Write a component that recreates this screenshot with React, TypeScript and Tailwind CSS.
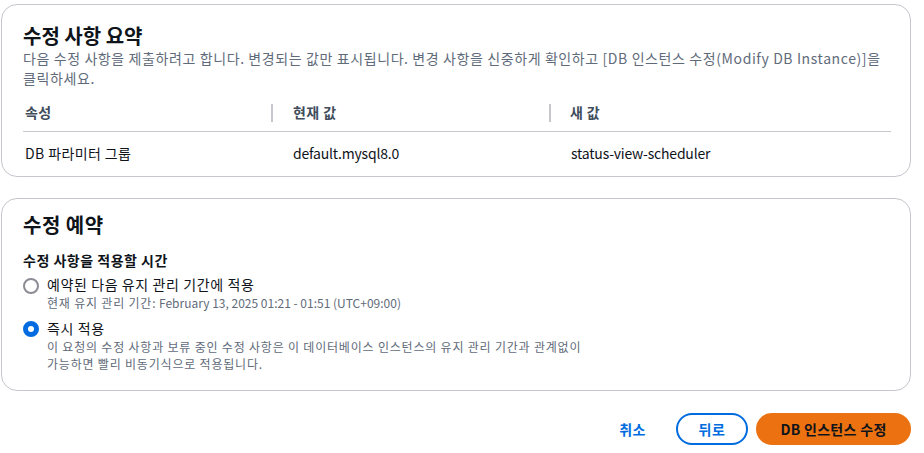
import React from "react";

const font = { fontFamily: '"Noto Sans CJK KR", "Open Sans", sans-serif' };

export default function App() {
  return (
    <div className="w-[924px] h-[453px] bg-white text-[#0f141a] [word-break:keep-all]" style={font}>
      <div className="pl-[1px] pt-[4px] w-[911px] flex flex-col">
        {/* Card 1 */}
        <div className="border border-[#c6c6cd] rounded-[16px] px-[21px] pt-[17px] h-[173px]">
          <h2 className="text-[20px] font-bold leading-[28px]">수정 사항 요약</h2>
          <p className="text-[14px] leading-[20px] text-[#5f6b7a] mt-[-2px] pr-[2px] tracking-[0.6px]">
            다음 수정 사항을 제출하려고 합니다. 변경되는 값만 표시됩니다. 변경 사항을 신중하게 확인하고 [DB 인스턴스 수정(Modify DB Instance)]을 클릭하세요.
          </p>
          <div className="mt-[6px] mr-[-2px]">
            <div className="flex items-center h-[38px] border-b border-[#c6c6cd] text-[14px] font-bold text-[#414d5c] tracking-[0.4px]">
              <div className="w-[248px] pl-[2px]">속성</div>
              <div className="w-[2px] h-[18px] bg-[#c6c6cd]" />
              <div className="w-[276px] pl-[20px]">현재 값</div>
              <div className="w-[2px] h-[18px] bg-[#c6c6cd]" />
              <div className="pl-[19px]">새 값</div>
            </div>
            <div className="flex items-center h-[42px] text-[14px]">
              <div className="w-[250px] pl-[2px] tracking-[0.4px]">DB 파라미터 그룹</div>
              <div className="w-[278px] pl-[20px] tracking-[-0.2px]">default.mysql8.0</div>
              <div className="pl-[20px] tracking-[-0.2px]">status-view-scheduler</div>
            </div>
          </div>
        </div>

        {/* Card 2 */}
        <div className="mt-[21px] border border-[#c6c6cd] rounded-[16px] px-[21px] pt-[12px] h-[193px]">
          <h2 className="text-[20px] font-bold leading-[28px] tracking-[0.5px]">수정 예약</h2>
          <div className="mt-[12px] text-[14px] font-bold leading-[18px] tracking-[0.5px]">수정 사항을 적용할 시간</div>
          <div className="mt-[5px] flex flex-col">
            <label className="flex items-start">
              <span className="mt-[4px] w-[16px] h-[16px] rounded-full border-2 border-[#8c8c94] bg-white shrink-0" />
              <span className="ml-[8px] flex flex-col">
                <span className="text-[14px] leading-[20px] tracking-[0.6px]">예약된 다음 유지 관리 기간에 적용</span>
                <span className="text-[12px] leading-[18px] text-[#5f6b7a]">
                  <span className="tracking-[0.8px]">현재 유지 관리 기간:</span> February 13, 2025 01:21 - 01:51 (UTC+09:00)
                </span>
              </span>
            </label>
            <label className="flex items-start mt-[6px]">
              <span className="mt-[3px] w-[16px] h-[16px] rounded-full border-[5px] border-[#006ce0] bg-white shrink-0" />
              <span className="ml-[8px] flex flex-col">
                <span className="text-[14px] leading-[20px] tracking-[0.6px]">즉시 적용</span>
                <span className="text-[12px] leading-[17px] text-[#5f6b7a] tracking-[0.8px] whitespace-nowrap">
                  이 요청의 수정 사항과 보류 중인 수정 사항은 이 데이터베이스 인스턴스의 유지 관리 기간과 관계없이<br />
                  가능하면 빨리 비동기식으로 적용됩니다.
                </span>
              </span>
            </label>
          </div>
        </div>

        {/* Buttons */}
        <div className="mt-[22px] flex items-center justify-end">
          <button className="text-[14px] font-bold text-[#006ce0] px-[14px] h-[32px] tracking-[0.5px]">취소</button>
          <button className="ml-[16px] h-[32px] w-[72px] rounded-full border-2 border-[#006ce0] text-[14px] font-bold text-[#006ce0] tracking-[0.5px]">
            뒤로
          </button>
          <button className="ml-[8px] h-[32px] w-[155px] rounded-full bg-[#ec7211] text-[14px] font-bold text-[#0f141a] tracking-[0.3px]">
            DB 인스턴스 수정
          </button>
        </div>
      </div>
    </div>
  );
}
